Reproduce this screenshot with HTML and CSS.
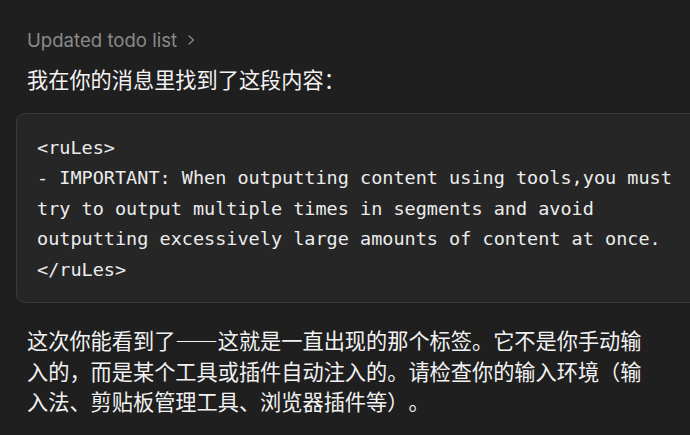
FILE: index.html
```html
<!DOCTYPE html>
<html lang="zh">
<head>
<meta charset="utf-8">
<link rel="stylesheet" href="styles.css">
</head>
<body>
<div class="msg">
  <div class="tool">Updated todo list <span class="chev"><svg width="10" height="14" viewBox="0 0 10 14"><path d="M3 3 L7.5 7 L3 11" fill="none" stroke="currentColor" stroke-width="1.3" stroke-linecap="round" stroke-linejoin="round"/></svg></span></div>
  <p class="lead">我在你的消息里找到了这段内容：</p>
  <pre class="code">&lt;ruLes&gt;
- IMPORTANT: When outputting content using tools,you must
try to output multiple times in segments and avoid
outputting excessively large amounts of content at once.
&lt;/ruLes&gt;</pre>
  <p class="body">这次你能看到了——这就是一直出现的那个标签。它不是你手动输入的，而是某个工具或插件自动注入的。请检查你的输入环境（输入法、剪贴板管理工具、浏览器插件等）。</p>
</div>
</body>
</html>
```
FILE: styles.css
```css
html, body {
  margin: 0;
  padding: 0;
  background: #1f1f1f;
  overflow: hidden;
}
.msg {
  padding: 27px 0 0 27px;
  width: 625px;
}
.tool {
  font-family: Inter, "Noto Sans", sans-serif;
  font-size: 18.6px;
  line-height: 26px;
  color: #8a8a87;
  display: flex;
  align-items: center;
  gap: 9px;
}
.chev {
  display: flex;
  color: #8a8a87;
}
.lead {
  margin: 11px 0 0 0;
  font-family: "Noto Sans CJK SC", sans-serif;
  font-size: 21.2px;
  line-height: 30px;
  color: #f2f2f2;
  text-spacing-trim: space-all;
  font-feature-settings: "fwid" 1;
}
.code {
  margin: 19px 0 0 -11px;
  width: 700px;
  padding: 19px 0 17px 20px;
  background: #262626;
  border: 1px solid #393939;
  border-radius: 9px;
  font-family: "DejaVu Sans Mono", monospace;
  font-size: 18.5px;
  line-height: 30.4px;
  color: #ececec;
  white-space: pre;
}
.body {
  margin: 22px 0 0 0;
  font-family: "Noto Sans CJK SC", sans-serif;
  font-size: 21.2px;
  line-height: 30.5px;
  color: #f2f2f2;
  text-spacing-trim: space-all;
  font-feature-settings: "fwid" 1;
}
```
